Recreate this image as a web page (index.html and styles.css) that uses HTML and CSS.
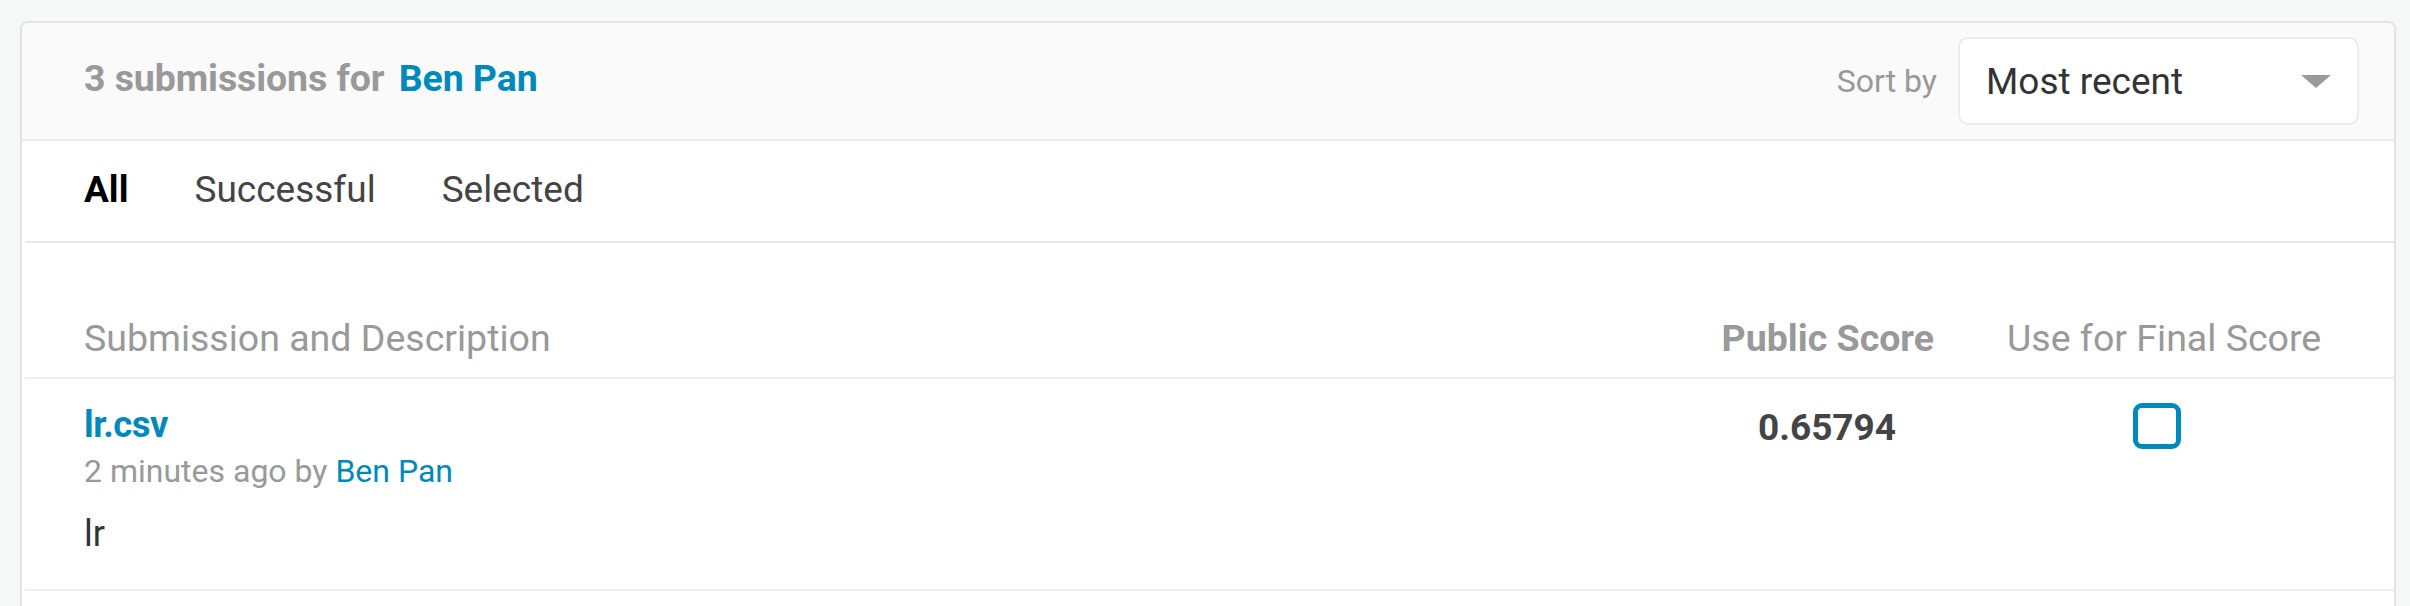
FILE: index.html
```html
<!DOCTYPE html>
<html lang="en">
<head>
<meta charset="utf-8">
<title>Submissions</title>
<link rel="stylesheet" href="styles.css">
</head>
<body>
<div class="card">
  <div class="card-header">
    <h2 class="title">3 submissions for <a class="link" href="#">Ben Pan</a></h2>
    <div class="sort">
      <span class="sort-label">Sort by</span>
      <div class="select">
        <span class="select-value">Most recent</span>
        <svg class="select-arrow" width="30" height="13" viewBox="0 0 30 13"><path d="M0 0 L30 0 L15 13 Z" fill="#999"/></svg>
      </div>
    </div>
  </div>
  <nav class="tabs">
    <span class="tab active">All</span>
    <span class="tab">Successful</span>
    <span class="tab">Selected</span>
  </nav>
  <div class="table">
    <div class="thead">
      <div class="th th-desc">Submission and Description</div>
      <div class="th th-score">Public Score</div>
      <div class="th th-final">Use for Final Score</div>
    </div>
    <div class="row">
      <div class="cell-desc">
        <a class="file" href="#">lr.csv</a>
        <div class="meta">2 minutes ago by <a class="link-meta" href="#">Ben Pan</a></div>
        <div class="desc">lr</div>
      </div>
      <div class="cell-score">0.65794</div>
      <div class="cell-final"><span class="checkbox"></span></div>
    </div>
  </div>
</div>
</body>
</html>
```
FILE: styles.css
```css
html, body {
  margin: 0;
  padding: 0;
}
body {
  background: #f5f8f9;
  font-family: Roboto, "Liberation Sans", Arial, sans-serif;
  padding: 21px 14px 0 20px;
  height: 606px;
  box-sizing: border-box;
  overflow: hidden;
}
a { text-decoration: none; }

.card {
  background: #fff;
  border: 2px solid #e1e3e4;
  border-radius: 8px;
  overflow: hidden;
  min-height: 600px;
}

.card-header {
  background: #fafafa;
  display: flex;
  align-items: center;
  justify-content: space-between;
  padding: 14px 35px 14px 62px;
  border-bottom: 2px solid #ececec;
}
.title {
  margin: 0 0 6px 0;
  font-size: 37.5px;
  line-height: 44px;
  font-weight: 700;
  color: #999;
  letter-spacing: -0.1px;
}
.link {
  color: #008abc;
  margin-left: 5px;
}
.sort {
  display: flex;
  align-items: center;
  gap: 21px;
}
.sort-label {
  font-size: 32px;
  color: #999;
}
.select {
  width: 401px;
  height: 88px;
  box-sizing: border-box;
  background: #fff;
  border: 2px solid #ececec;
  border-radius: 10px;
  display: flex;
  align-items: center;
  justify-content: space-between;
  padding: 0 26px 0 26px;
}
.select-value {
  font-size: 37px;
  color: #333;
}
.select-arrow {
  display: block;
}

.tabs {
  display: flex;
  gap: 66px;
  margin-left: 3px;
  padding: 27px 0 29px 59px;
  border-bottom: 2px solid #e8e8e8;
}
.tab {
  font-size: 37px;
  line-height: 44px;
  color: #444;
}
.tab.active {
  font-weight: 700;
  color: #000;
}

.table {
  margin-left: 3px;
}
.thead, .row {
  display: grid;
  grid-template-columns: 1fr 214px 314px;
  column-gap: 73px;
  padding: 0 73px 0 59px;
}
.thead {
  padding-top: 73px;
  padding-bottom: 17px;
  border-bottom: 2px solid #efefef;
}
.th {
  font-size: 37.5px;
  line-height: 44px;
  color: #999;
  white-space: nowrap;
}
.th-score {
  font-weight: 700;
  text-align: right;
}
.th-final {
  text-align: left;
}

.row {
  padding-top: 24px;
  padding-bottom: 33px;
  border-bottom: 2px solid #efefef;
}
.file {
  display: block;
  font-size: 36.5px;
  line-height: 44px;
  font-weight: 700;
  color: #008abc;
  letter-spacing: -0.5px;
}
.meta {
  margin-top: 4px;
  font-size: 32px;
  line-height: 40px;
  color: #999;
}
.link-meta {
  color: #008abc;
}
.desc {
  margin-top: 21px;
  font-size: 36px;
  line-height: 44px;
  color: #333;
}
.cell-score {
  text-align: center;
  font-size: 37px;
  line-height: 44px;
  font-weight: 700;
  color: #444;
  padding-top: 3px;
}
.cell-final {
  display: flex;
  justify-content: center;
}
.checkbox {
  display: block;
  margin-left: -14px;
  width: 48px;
  height: 46px;
  box-sizing: border-box;
  border: 5px solid #008abc;
  border-radius: 9px;
}
```
